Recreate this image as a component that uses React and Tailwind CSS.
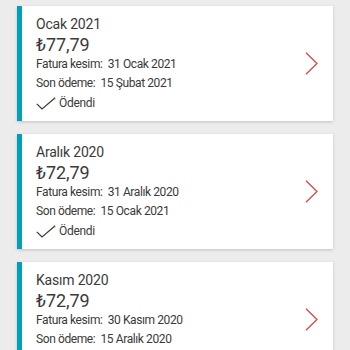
import React from 'react';

const bills = [
  { month: 'Ocak 2021', amount: '₺77,79', issued: '31 Ocak 2021', due: '15 Şubat 2021', paid: true },
  { month: 'Aralık 2020', amount: '₺72,79', issued: '31 Aralık 2020', due: '15 Ocak 2021', paid: true },
  { month: 'Kasım 2020', amount: '₺72,79', issued: '30 Kasım 2020', due: '15 Aralık 2020', paid: true },
];

const Check = () => (
  <svg width="20" height="13" viewBox="0 0 20 13" fill="none" stroke="#3a3a3a" strokeWidth="1.2">
    <path d="M0.8 6.8 L6 12 L19.2 0.8" />
  </svg>
);

const Chevron = () => (
  <svg width="13" height="23" viewBox="0 0 13 23" fill="none" stroke="#e04545" strokeWidth="1.3">
    <path d="M1 0.8 L12 11.5 L1 22.2" />
  </svg>
);

const BillCard = ({ bill }) => (
  <div className="flex h-[115px] bg-white shadow-[0_1px_3px_rgba(0,0,0,0.18)]">
    <div className="w-[5px] bg-[#00a0b8]" />
    <div className="flex flex-1 items-center">
      <div className="flex-1 self-start pl-[14px] pt-[7px] text-[#3a3a3a]">
        <div className="text-[14px] leading-[22px] tracking-[-0.2px]">{bill.month}</div>
        <div className="text-[18px] leading-[20px] tracking-[-0.1px]">{bill.amount}</div>
        <div className="text-[12px] leading-[19px] tracking-[-0.4px]">Fatura kesim:&nbsp; {bill.issued}</div>
        <div className="text-[12px] leading-[19px] tracking-[-0.4px]">Son ödeme:&nbsp; {bill.due}</div>
        {bill.paid && (
          <div className="flex items-center gap-[3px] text-[12px] leading-[20px] tracking-[-0.3px]">
            <Check />
            <span>Ödendi</span>
          </div>
        )}
      </div>
      <div className="pr-[15px]">
        <Chevron />
      </div>
    </div>
  </div>
);

export default function App() {
  return (
    <div className="h-[350px] w-[350px] overflow-hidden bg-[#ececec] px-[17px] pt-[6px] font-['Roboto',sans-serif]">
      <div className="flex flex-col gap-[13px]">
        {bills.map((bill) => (
          <BillCard key={bill.month} bill={bill} />
        ))}
      </div>
    </div>
  );
}
